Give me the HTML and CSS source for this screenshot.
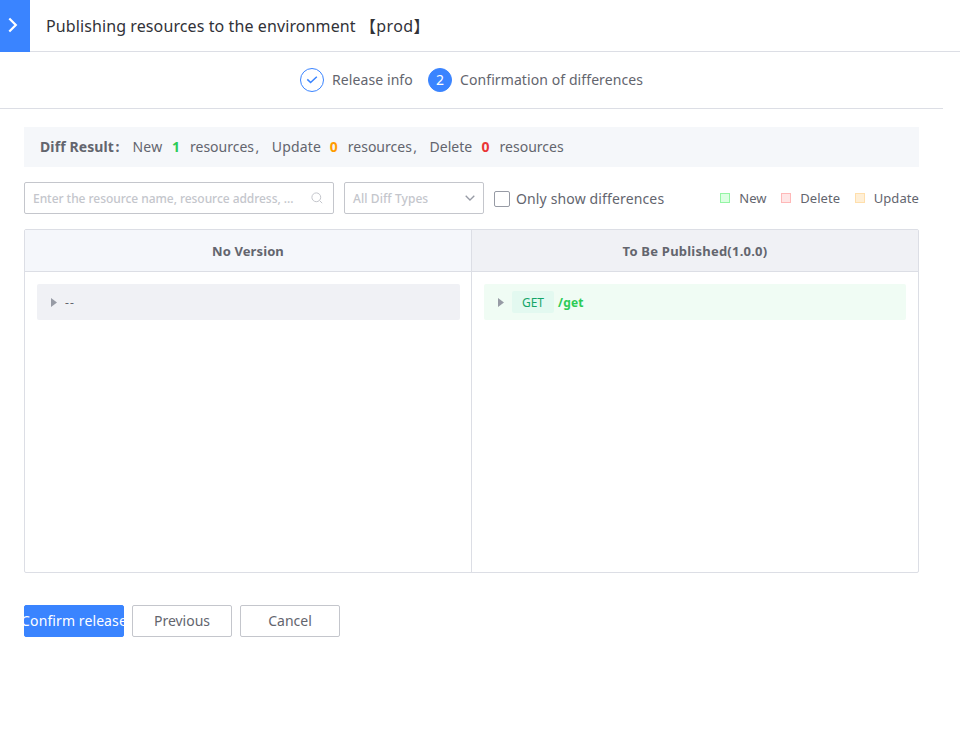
FILE: index.html
```html
<!DOCTYPE html>
<html lang="en">
<head>
<meta charset="utf-8">
<title>Publish resources</title>
<link rel="stylesheet" href="styles.css">
</head>
<body>
<header class="header">
  <button class="close" aria-label="Close"><svg width="30" height="52" viewBox="0 0 30 52"><path d="M9.3 18.5 15.8 25 9.3 31.5" fill="none" stroke="#fff" stroke-width="2.2"/></svg></button>
  <h1 class="title"><span class="title-text">Publishing resources to the environment</span><span class="title-env">【prod】</span></h1>
</header>
<nav class="steps">
  <div class="step step-done"><span class="dot"><svg width="22" height="22" viewBox="0 0 22 22"><path d="M6.3 10.4 9.6 13.5 15.8 7.7" fill="none" stroke="#3a84ff" stroke-width="1.5"/></svg></span><span class="step-label">Release info</span></div>
  <div class="step step-current"><span class="dot">2</span><span class="step-label">Confirmation of differences</span></div>
</nav>
<main class="main">
  <section class="summary">
    <strong class="lead">Diff Result<span class="mark">:</span></strong>
    <span class="word-new">New</span><b class="count green">1</b><span class="resources">resources<span class="mark">,</span></span>
    <span class="word-update">Update</span><b class="count orange">0</b><span class="resources">resources<span class="mark">,</span></span>
    <span class="word-delete">Delete</span><b class="count red">0</b><span class="resources">resources</span>
  </section>
  <section class="filters">
    <div class="field search"><span class="search-text">Enter the resource name, resource address, ...</span><svg width="12" height="12" viewBox="0 0 12 12" fill="none" stroke="#c4c6cc"><circle cx="5.3" cy="5.3" r="4.4"/><path d="M8.6 8.6 11.2 11.2"/></svg></div>
    <div class="field select"><span class="select-text">All Diff Types</span><svg width="10" height="6" viewBox="0 0 10 6" fill="none" stroke="#979ba5" stroke-width="1.3"><path d="M.7.7 5 5 9.3.7"/></svg></div>
    <label class="only"><span class="box"></span><span class="only-text">Only show differences</span></label>
    <div class="legend">
      <span class="key key-new"><i></i><span>New</span></span>
      <span class="key key-delete"><i></i><span>Delete</span></span>
      <span class="key key-update"><i></i><span>Update</span></span>
    </div>
  </section>
  <section class="diff">
    <div class="side">
      <h2 class="side-title"><span class="old-title">No Version</span></h2>
      <div class="row"><svg class="arrow" width="6" height="9" viewBox="0 0 6 9"><path d="M0 0 6 4.5 0 9z"/></svg><span class="dash">--</span></div>
    </div>
    <div class="side side-new">
      <h2 class="side-title"><span class="new-title">To Be Published(1.0.0)</span></h2>
      <div class="row"><svg class="arrow" width="6" height="9" viewBox="0 0 6 9"><path d="M0 0 6 4.5 0 9z"/></svg><span class="method">GET</span><b class="path">/get</b></div>
    </div>
  </section>
  <div class="actions">
    <button class="btn primary"><span>Confirm release</span></button>
    <button class="btn"><span>Previous</span></button>
    <button class="btn"><span>Cancel</span></button>
  </div>
</main>
</body>
</html>
```
FILE: styles.css
```css
* { box-sizing: border-box; }
body { margin: 0; height: 747px; overflow: hidden; background: #fff; color: #63656e; font: 14px/20px "Noto Sans", "Noto Sans CJK SC", sans-serif; white-space: nowrap; }
svg { display: block; flex: none; }
button { font: inherit; }
.header { display: flex; height: 52px; border-bottom: 1px solid #dcdee5; }
.close { width: 30px; height: 52px; padding: 0; border: 0; background: #3a84ff; }
.title { display: flex; margin: 0 0 0 16px; font-size: 16px; line-height: 52px; font-weight: 400; color: #313238; }
.title-text { width: 314px; letter-spacing: .1px; }
.title-env { letter-spacing: .35px; }
.steps { display: flex; align-items: center; justify-content: center; gap: 15px; width: 943px; height: 57px; border-bottom: 1px solid #dcdee5; }
.step { display: flex; align-items: center; gap: 8px; }
.dot { display: flex; align-items: center; justify-content: center; width: 24px; height: 24px; border: 1px solid #3a84ff; border-radius: 50%; }
.step-current .dot { background: #3a84ff; color: #fff; }
.step-label { letter-spacing: .09px; }
.step-done .step-label { width: 81px; }
.step-current .step-label { width: 183px; }
.main { width: 919px; padding: 18px 0 0 24px; }
.summary { display: flex; align-items: center; height: 40px; padding-left: 16px; background: #f5f7fa; }
.lead { width: 92.5px; letter-spacing: .1px; }
.mark { margin-left: 1.5px; }
.word-new { width: 39.5px; letter-spacing: .2px; }
.word-update { width: 58px; letter-spacing: .15px; }
.word-delete { width: 52px; }
.count { width: 18px; }
.resources { width: 81.8px; }
.green { color: #2dcb56; }
.orange { color: #ff9c01; }
.red { color: #ea3636; }
.filters { display: flex; align-items: center; height: 32px; margin-top: 15px; }
.field { display: flex; align-items: center; justify-content: space-between; height: 32px; padding: 0 9px 0 8px; border: 1px solid #c4c6cc; border-radius: 2px; color: #c4c6cc; font-size: 12px; font-weight: 500; }
.search-text { padding-top: 1px; letter-spacing: -.05px; }
.select-text { padding-top: 1px; letter-spacing: .08px; }
.search { width: 310px; }
.search svg { margin-right: 1px; }
.select { width: 140px; margin-left: 10px; padding-right: 8px; }
.only { display: flex; align-items: center; margin-left: 10px; gap: 6px; }
.only-text { padding-top: 1px; letter-spacing: .14px; }
.box { width: 16px; height: 16px; margin-top: 1px; border: 1px solid #979ba5; border-radius: 2px; }
.legend { display: flex; margin-left: auto; font-size: 13px; letter-spacing: .08px; }
.key { display: flex; align-items: center; }
.key i { width: 10px; height: 10px; margin-right: 9px; border: 1px solid #94f5a4; background: #dcffe2; }
.key-new { width: 61px; }
.key-delete { width: 74px; }
.key-delete i { border-color: #ffb8b8; background: #ffe6e6; }
.key-update i { margin-right: 8.5px; border-color: #ffdfac; background: #ffefd6; }
.diff { display: grid; grid-template-columns: 447px 1fr; height: 344px; margin-top: 15px; border: 1px solid #dcdee5; border-radius: 2px; }
.side { border-right: 1px solid #dcdee5; }
.side-new { border-right: 0; }
.side-title { margin: 0; height: 42px; border-bottom: 1px solid #dcdee5; background: #f5f7fb; font-size: 13px; line-height: 42px; font-weight: 700; text-align: center; letter-spacing: .1px; }
.side-new .side-title { background: #f0f1f5; letter-spacing: .23px; }
.row { display: flex; align-items: center; height: 36px; margin: 12px 11px 0 12px; padding-left: 14px; border-radius: 2px; background: #f0f1f5; font-size: 12px; }
.side-new .row { margin-right: 12px; background: #f0fcf4; }
.arrow { fill: #979ba5; }
.dash { margin-left: 8px; padding-top: 2px; letter-spacing: 1.2px; }
.method { width: 42px; height: 22px; margin-left: 8px; border-radius: 2px; background: #e3f9f0; color: #14a568; line-height: 24px; text-align: center; }
.path { margin-left: 4px; padding-top: 2px; color: #2dcb56; letter-spacing: .2px; }
.actions { display: flex; gap: 8px; margin-top: 32px; }
.btn { display: flex; align-items: center; justify-content: center; width: 100px; height: 32px; padding: 0; border: 1px solid #c4c6cc; border-radius: 2px; background: #fff; color: #63656e; }
.primary { border-color: #3a84ff; background: #3a84ff; color: #fff; letter-spacing: .1px; }
```
